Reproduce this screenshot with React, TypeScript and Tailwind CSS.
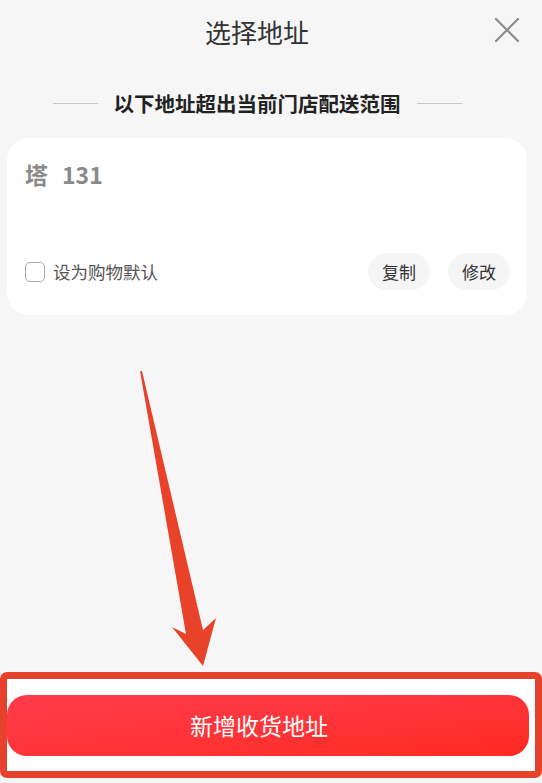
import React from "react";

const font = { fontFamily: '"Noto Sans CJK SC", "Noto Sans", sans-serif' };

export default function App() {
  return (
    <div
      className="relative w-[542px] h-[783px] bg-[#f6f6f6] flex flex-col overflow-hidden"
      style={font}
    >
      {/* header */}
      <div className="relative h-[64px] flex items-center justify-center pr-[28px]">
        <span className="text-[26px] leading-none text-[#333]">选择地址</span>
        <button className="absolute right-[22px] top-[17px] w-[26px] h-[26px] flex items-center justify-center">
          <svg width="26" height="26" viewBox="0 0 26 26">
            <path d="M2 2 L24 24 M24 2 L2 24" stroke="#8c8c8c" strokeWidth="2.2" strokeLinecap="round" />
          </svg>
        </button>
      </div>

      {/* notice */}
      <div className="mt-[27px] h-[24px] flex items-center justify-center pr-[28px]">
        <div className="w-[45px] h-px bg-[#c8c8c8]" />
        <span className="mx-[16px] text-[20.5px] leading-none font-bold text-[#222]">
          以下地址超出当前门店配送范围
        </span>
        <div className="w-[45px] h-px bg-[#c8c8c8]" />
      </div>

      {/* address card */}
      <div className="mt-[23px] ml-[7px] w-[520px] h-[177px] bg-white rounded-[22px] px-[18px] pt-[21px] flex flex-col">
        <div className="flex items-center h-[30px] text-[23px] font-semibold text-[#8a8a8a] leading-none">
          <span>塔</span>
          <span className="ml-[14px]">131</span>
        </div>
        <div className="mt-[64px] flex items-center h-[37px]">
          <div className="w-[20px] h-[20px] rounded-[5px] border border-[#a8a8a8]" />
          <span className="ml-[8px] text-[17.5px] leading-none text-[#555]">设为购物默认</span>
          <div className="ml-auto flex items-center gap-[18px] mr-[-1px]">
            <button className="w-[62px] h-[37px] rounded-full bg-[#f5f5f5] text-[17px] text-[#333] leading-none">
              复制
            </button>
            <button className="w-[62px] h-[37px] rounded-full bg-[#f5f5f5] text-[17px] text-[#333] leading-none">
              修改
            </button>
          </div>
        </div>
      </div>

      {/* bottom action, highlighted */}
      <div className="mt-auto mb-[5px] w-[542px] h-[106px] border-[7px] border-[#e5412b] rounded-[7px] bg-white pt-[16px] pr-[6px]">
        <button className="w-full h-[61px] rounded-[20px] bg-gradient-to-br from-[#ff3c4c] to-[#ff2a1e] flex items-center justify-center pr-[18px]">
          <span className="text-[23px] text-white leading-none">新增收货地址</span>
        </button>
      </div>

      {/* annotation arrow */}
      <svg className="absolute left-0 top-0 pointer-events-none" width="542" height="783" viewBox="0 0 542 783">
        <polygon
          points="140,371 142,371 203,630 216,618 203,666 172,627 186,634"
          fill="#e8432a"
        />
      </svg>
    </div>
  );
}
